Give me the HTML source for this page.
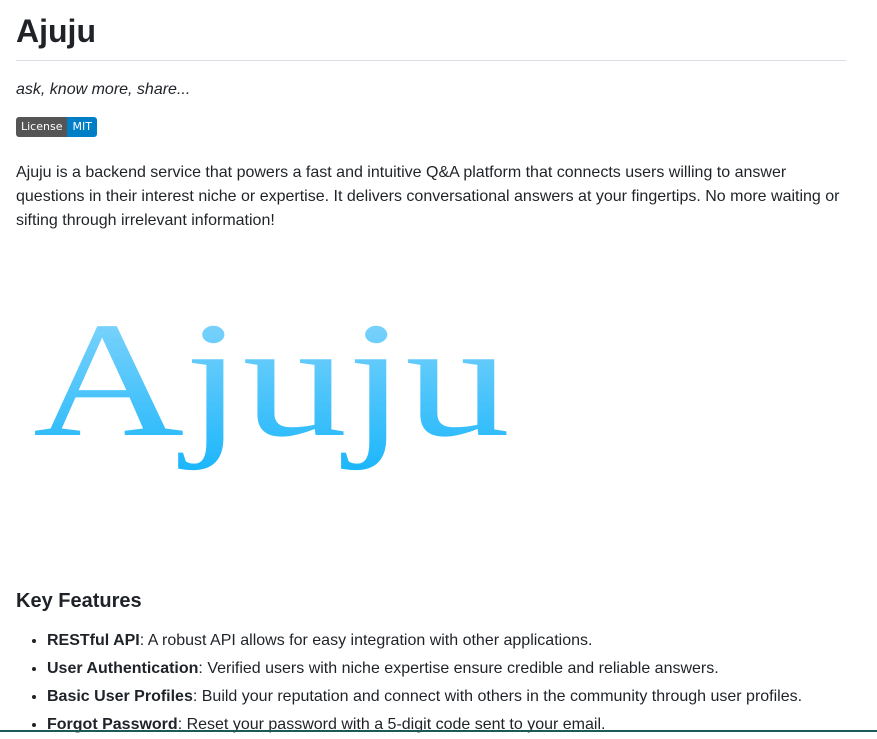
<!DOCTYPE html>
<html><head><meta charset="utf-8"><style>
body{margin:0;background:#fff;font-family:"Liberation Sans",sans-serif;color:#1f2328;width:877px;height:732px;overflow:hidden;position:relative}
.c{padding:0 16px;width:830px}
h1{font-size:32px;margin:0;padding:11px 0 9px;border-bottom:1px solid #d8dee4;line-height:40px}
.tag{font-style:italic;font-size:16px;margin:19px 0 0;line-height:20px}
.badge{display:inline-flex;margin-top:17px;font-family:"DejaVu Sans",sans-serif;font-size:11px;border-radius:3px;overflow:hidden;color:#fff;height:20px;line-height:20px}
.badge span{padding:0 5px}
p.d{font-size:16px;line-height:24px;margin:24px 0 0}
h2{font-size:20px;margin:0;position:absolute;top:590px;left:16px}
ul{position:absolute;top:627px;left:0;margin:0;padding-left:47px;font-size:16px;line-height:28px}
.bar{position:absolute;left:0;right:0;bottom:0;height:2px;background:#1b5a56}
</style></head><body>
<div class="c">
<h1>Ajuju</h1>
<p class="tag">ask, know more, share...</p>
<div class="badge"><span style="background:#555">License</span><span style="background:#007ec6">MIT</span></div>
<p class="d">Ajuju is a backend service that powers a fast and intuitive Q&amp;A platform that connects users willing to answer questions in their interest niche or expertise. It delivers conversational answers at your fingertips. No more waiting or sifting through irrelevant information!</p>
</div>
<svg style="position:absolute;left:0;top:290px" width="560" height="230">
<defs><linearGradient id="g" x1="0" y1="0" x2="0" y2="1"><stop offset="0" stop-color="#8fd8fb"/><stop offset="1" stop-color="#1cb6fb"/></linearGradient></defs>
<text x="33" y="145" font-family="Liberation Serif,serif" font-size="165" fill="url(#g)" textLength="477" lengthAdjust="spacingAndGlyphs">Ajuju</text>
</svg>
<h2>Key Features</h2>
<ul>
<li><b>RESTful API</b>: A robust API allows for easy integration with other applications.</li>
<li><b>User Authentication</b>: Verified users with niche expertise ensure credible and reliable answers.</li>
<li><b>Basic User Profiles</b>: Build your reputation and connect with others in the community through user profiles.</li>
<li><b>Forgot Password</b>: Reset your password with a 5-digit code sent to your email.</li>
</ul>
<div class="bar"></div>
</body></html>
